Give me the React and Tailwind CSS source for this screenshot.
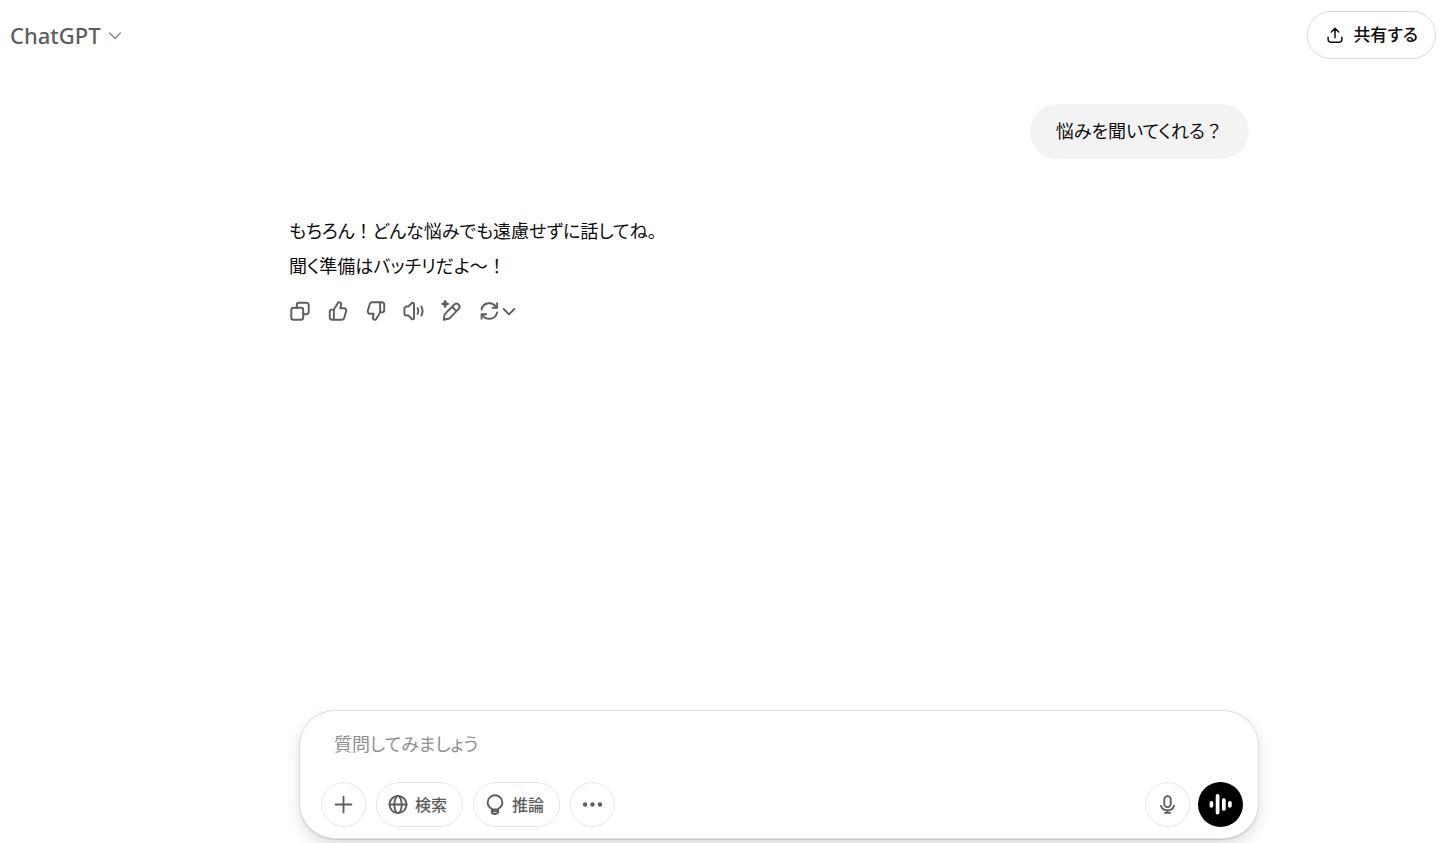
// src/App.jsx
//
// Chat screen: header on top, conversation in the middle, composer at the
// bottom of the window.

const MESSAGES = [
  { id: 1, role: 'user', lines: ['悩みを聞いてくれる？'] },
  {
    id: 2,
    role: 'assistant',
    lines: ['もちろん！どんな悩みでも遠慮せずに話してね。', '聞く準備はバッチリだよ～！'],
  },
];

export default function App() {
  return (
    <div className="flex h-screen flex-col overflow-hidden bg-white font-['Noto_Sans','Noto_Sans_CJK_JP',sans-serif] text-[#0d0d0d] [font-feature-settings:'palt']">
      <Header />

      <main className="flex-1 overflow-hidden pl-[90px]">
        <div className="mx-auto max-w-[960px] pt-[34px]">
          {MESSAGES.map((message) =>
            message.role === 'user' ? (
              <UserMessage key={message.id} lines={message.lines} />
            ) : (
              <AssistantMessage key={message.id} lines={message.lines} />
            ),
          )}
        </div>
      </main>

      <footer className="pb-1 pl-[110px]">
        <Composer />
      </footer>
    </div>
  );
}

function Header() {
  return (
    <header className="flex h-[70px] items-center justify-between pr-3 pl-[10px]">
      <button type="button" className="flex items-center gap-[6px] text-[22px] font-medium text-[#5d5d5d]">
        ChatGPT
        <ChevronIcon className="size-4 text-[#8f8f8f]" strokeWidth={2.3} />
      </button>
      <button
        type="button"
        className="flex h-12 items-center gap-[9px] rounded-full border border-black/15 pr-[17px] pl-[18px] text-[17px] font-medium"
      >
        <ShareIcon />
        共有する
      </button>
    </header>
  );
}

// Kana is set proportionally, but ！ and ？ keep their full-width cell.
function MessageLine({ text }) {
  return (
    <p>
      {text.split(/([！？])/).map((part, i) =>
        i % 2 === 1 ? (
          <span key={i} className="[font-feature-settings:normal]">
            {part}
          </span>
        ) : (
          part
        ),
      )}
    </p>
  );
}

function UserMessage({ lines }) {
  return (
    <article className="flex justify-end">
      <div className="rounded-[28px] bg-[#f3f3f3] px-[26px] py-[10px] text-[18px] leading-[35px]">
        {lines.map((line) => (
          <MessageLine key={line} text={line} />
        ))}
      </div>
    </article>
  );
}

function AssistantMessage({ lines }) {
  return (
    <article className="pt-[55px]">
      <div className="text-[18px] leading-[35px]">
        {lines.map((line) => (
          <MessageLine key={line} text={line} />
        ))}
      </div>
      <div className="flex items-center gap-4 pt-4 text-[#5d5d5d]">
        <IconButton label="コピーする">
          <CopyIcon />
        </IconButton>
        <IconButton label="よい回答です">
          <ThumbUpIcon />
        </IconButton>
        <IconButton label="よくない回答です">
          <ThumbUpIcon className="rotate-180" />
        </IconButton>
        <IconButton label="音声で読み上げる">
          <SpeakerIcon />
        </IconButton>
        <IconButton label="canvas で編集する">
          <EditIcon />
        </IconButton>
        <IconButton label="モデルを切り替える">
          <RefreshIcon />
          <ChevronIcon className="size-4" strokeWidth={2.8} />
        </IconButton>
      </div>
    </article>
  );
}

function IconButton({ label, children }) {
  return (
    <button type="button" aria-label={label} className="flex items-center">
      {children}
    </button>
  );
}

function Composer() {
  return (
    <form
      className="mx-auto flex max-w-[960px] flex-col gap-5 rounded-[36px] border border-black/12 bg-white pt-[15px] pr-[15px] pb-[11px] pl-[21px] shadow-[0_1px_1px_rgba(0,0,0,0.12),0_6px_14px_rgba(0,0,0,0.13)]"
      onSubmit={(e) => e.preventDefault()}
    >
      <input
        type="text"
        aria-label="質問"
        placeholder="質問してみましょう"
        className="h-9 px-[13px] text-[18px] outline-none placeholder:text-[#8f8f8f]"
      />
      <div className="flex items-center text-[#5d5d5d]">
        <div className="flex flex-1 gap-[10px]">
          <RoundButton label="ファイルを追加">
            <PlusIcon />
          </RoundButton>
          <PillButton icon={<GlobeIcon />}>検索</PillButton>
          <PillButton icon={<BulbIcon />}>推論</PillButton>
          <RoundButton label="その他">
            <DotsIcon />
          </RoundButton>
        </div>
        <div className="flex gap-2">
          <RoundButton label="音声入力">
            <MicIcon />
          </RoundButton>
          <button
            type="button"
            aria-label="音声モード"
            className="flex size-[45px] items-center justify-center rounded-full bg-black text-white"
          >
            <VoiceIcon />
          </button>
        </div>
      </div>
    </form>
  );
}

function RoundButton({ label, children }) {
  return (
    <button
      type="button"
      aria-label={label}
      className="flex size-[45px] items-center justify-center rounded-full border border-black/10"
    >
      {children}
    </button>
  );
}

function PillButton({ icon, children }) {
  return (
    <button
      type="button"
      className="flex h-[45px] items-center gap-[6px] rounded-full border border-black/10 pr-[15px] pl-[10px] text-[16px] font-medium"
    >
      {icon}
      {children}
    </button>
  );
}

/* ---- Icons ---- */

function Icon({ className = 'size-[22px]', strokeWidth = 2.1, children }) {
  return (
    <svg
      className={className}
      viewBox="0 0 24 24"
      fill="none"
      stroke="currentColor"
      strokeWidth={strokeWidth}
      strokeLinecap="round"
      strokeLinejoin="round"
      aria-hidden="true"
    >
      {children}
    </svg>
  );
}

function ChevronIcon({ className, strokeWidth }) {
  return (
    <Icon className={className} strokeWidth={strokeWidth}>
      <path d="M4 9l8 8 8-8" />
    </Icon>
  );
}

function ShareIcon() {
  return (
    <Icon className="size-[18px]" strokeWidth={2}>
      <path d="M12 15.500V3.500M7 8l5-5 5 5M2.800 15v3a3.500 3.500 0 003.500 3.500h11.400a3.500 3.500 0 003.500-3.500v-3" />
    </Icon>
  );
}

function CopyIcon() {
  return (
    <Icon>
      <rect x="2.500" y="8.500" width="13" height="13" rx="2.500" />
      <path d="M8.500 8.500V5.500A2.500 2.500 0 0111 3h8A2.500 2.500 0 0121.500 5.500v7.500a2.500 2.500 0 01-2.500 2.500h-3.500" />
    </Icon>
  );
}

function ThumbUpIcon({ className = '' }) {
  return (
    <Icon className={`size-[22px] ${className}`}>
      <path d="M7.500 10.500v11H5.500A2.500 2.500 0 013 19v-6a2.500 2.500 0 012.500-2.500h2l4.300-7.200c.5-.8 1.200-1 2.100-.7 1.200.4 1.800 1.500 1.500 2.700L14.500 9h4a2.500 2.500 0 012.400 3.200l-2 7a3 3 0 01-2.900 2.300H7.500" />
    </Icon>
  );
}

function SpeakerIcon() {
  return (
    <Icon>
      <path d="M12 4.500v15c0 1.300-1.400 2-2.400 1.200L6 17H4A2.500 2.500 0 011.500 14.500v-5A2.500 2.500 0 014 7h2l3.600-3.700c1-.8 2.400-.1 2.400 1.200z" />
      <path d="M16 8.800c1 2 1 4.400 0 6.400M20 7.200c1.700 3 1.700 6.600 0 9.600" />
    </Icon>
  );
}

function EditIcon() {
  return (
    <Icon>
      <path d="M3 21.500l.8-5.200c.1-.6.4-1.100.8-1.500L14.500 4.900a3.400 3.400 0 014.800 4.800L9.500 19.700c-.4.400-1 .7-1.500.8zM12 7.400l4.800 4.800" />
      <path
        d="M4.500.500c.5 2.500 1.200 3.200 3.700 3.800-2.500.6-3.200 1.300-3.700 3.800C4 5.600 3.300 4.900.800 4.300 3.300 3.700 4 3 4.500.500z"
        fill="currentColor"
        strokeWidth="1.400"
      />
    </Icon>
  );
}

function RefreshIcon() {
  return (
    <Icon>
      <path d="M2.800 10.500A8.600 8.600 0 0118.800 8M19.800 13.500A8.600 8.600 0 013.800 16" />
      <path d="M19.800 3.500v5H14.800M2.800 20.500v-5h5" />
    </Icon>
  );
}

function PlusIcon() {
  return (
    <Icon className="size-[21px]">
      <path d="M12 3v18M3 12h18" />
    </Icon>
  );
}

function GlobeIcon() {
  return (
    <Icon>
      <circle cx="12" cy="11.500" r="9.300" />
      <ellipse cx="12" cy="11.500" rx="4" ry="9.300" />
      <path d="M2.700 11.500h18.600" />
    </Icon>
  );
}

function BulbIcon() {
  return (
    <Icon>
      <path d="M8.500 17v-.9C5.800 14.700 4 12.400 4 9.300a8 8 0 0116 0c0 3.100-1.800 5.400-4.500 6.800v.9zM8.500 17h7v1.800a3 3 0 01-3 3h-1a3 3 0 01-3-3z" />
      <path d="M9 18.800h6" />
    </Icon>
  );
}

function DotsIcon() {
  return (
    <Icon className="size-[21px]">
      <g fill="currentColor" stroke="none">
        <circle cx="3.500" cy="12" r="2.500" />
        <circle cx="12" cy="12" r="2.500" />
        <circle cx="20.500" cy="12" r="2.500" />
      </g>
    </Icon>
  );
}

function MicIcon() {
  return (
    <Icon className="size-[21px]">
      <rect x="8.300" y="2.500" width="7.400" height="12.500" rx="3.700" />
      <path d="M4.500 13.500a8 8 0 0015 0M12 18.500v3M9 21.500h6" />
    </Icon>
  );
}

function VoiceIcon() {
  return (
    <Icon className="size-[25px]" strokeWidth={3.6}>
      <path d="M3.300 10.500v2.800M9.200 3.700v16M15.200 7.800v8.400M21 10.500v2.800" />
    </Icon>
  );
}
